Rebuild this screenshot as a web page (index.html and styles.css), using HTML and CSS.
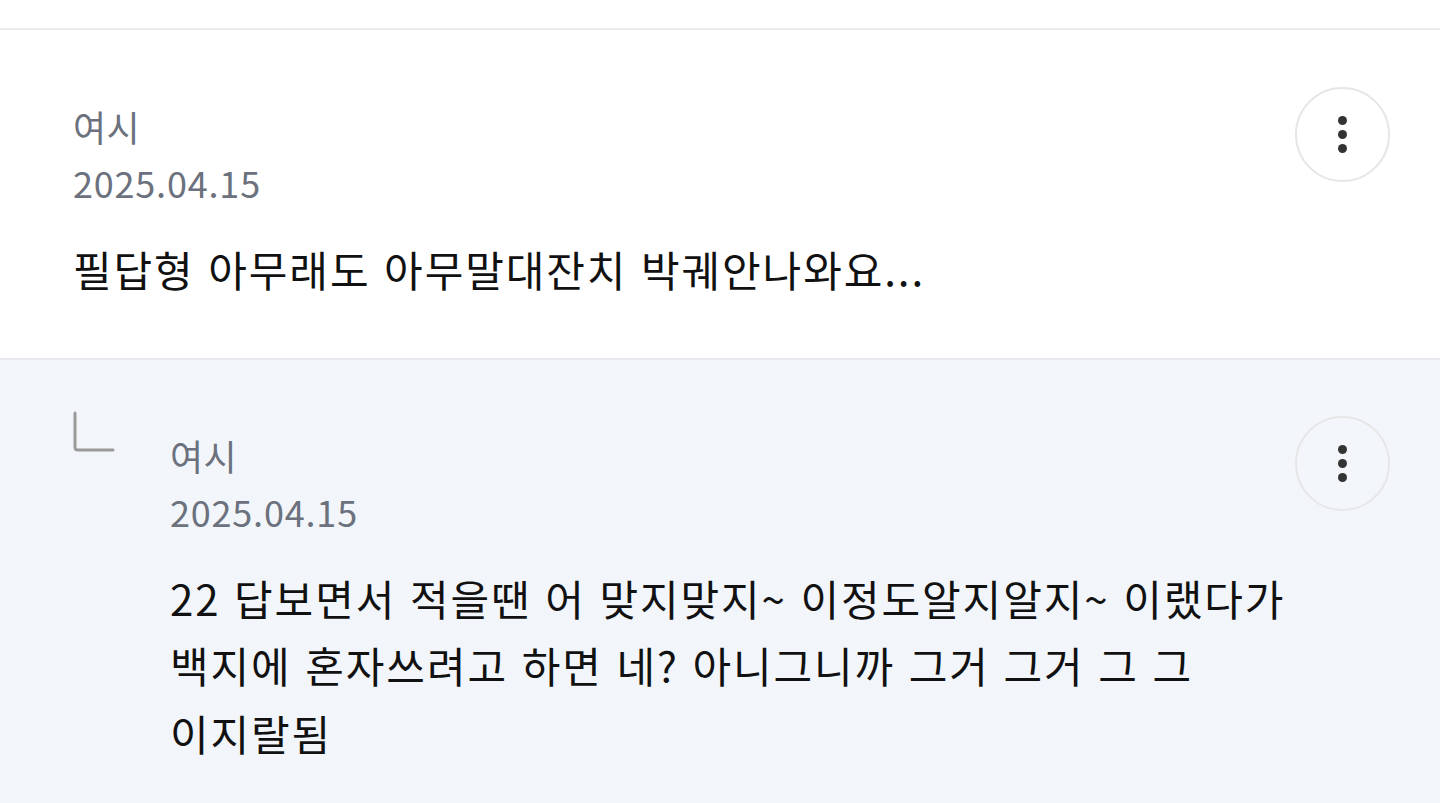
FILE: index.html
```html
<!DOCTYPE html>
<html lang="ko">
<head>
<meta charset="utf-8">
<title>댓글</title>
<link rel="stylesheet" href="styles.css">
</head>
<body>
<div class="topbar"></div>

<section class="comment">
  <div class="comment-main">
    <div class="author">여시</div>
    <div class="date">2025.04.15</div>
    <p class="text">필답형 아무래도 아무말대잔치 박궤안나와요...</p>
  </div>
  <button class="more" type="button" aria-label="더보기">
    <span class="dot"></span><span class="dot"></span><span class="dot"></span>
  </button>
</section>

<section class="comment reply">
  <svg class="reply-icon" width="42" height="42" viewBox="0 0 42 42" aria-hidden="true">
    <path d="M2 2 V36 Q2 39 5 39 H40" fill="none" stroke="#9a9a9a" stroke-width="3" stroke-linecap="round"/>
  </svg>
  <div class="comment-main">
    <div class="author">여시</div>
    <div class="date">2025.04.15</div>
    <p class="text">22 답보면서 적을땐 어 맞지맞지~ 이정도알지알지~ 이랬다가 백지에 혼자쓰려고 하면 네? 아니그니까 그거 그거 그 그 이지랄됨</p>
  </div>
  <button class="more" type="button" aria-label="더보기">
    <span class="dot"></span><span class="dot"></span><span class="dot"></span>
  </button>
</section>
</body>
</html>
```

FILE: styles.css
```css
html, body {
  margin: 0;
  padding: 0;
}

body {
  background: #ffffff;
  font-family: "Noto Sans CJK KR", "Noto Sans", sans-serif;
  color: #111111;
  overflow: hidden;
}

.topbar {
  height: 28px;
  border-bottom: 2px solid #e9ebef;
}

.comment {
  display: flex;
  align-items: flex-start;
  padding: 57px 50px 55px 73px;
  gap: 10px;
}

.comment-main {
  flex: 1;
  min-width: 0;
  margin-top: 12px;
}

.author {
  font-size: 36px;
  line-height: 54px;
  color: #6b717d;
  letter-spacing: 0.5px;
}

.date {
  font-size: 36px;
  line-height: 54px;
  color: #6b717d;
  margin-top: 2px;
  letter-spacing: 0.8px;
}

.text {
  margin: 26px 0 0;
  font-size: 42px;
  line-height: 67.5px;
  color: #111111;
  letter-spacing: 1.9px;
  word-break: keep-all;
}

.more {
  flex: none;
  width: 95px;
  height: 95px;
  border-radius: 50%;
  border: 2px solid #e6e6e6;
  background: transparent;
  padding: 0;
  display: flex;
  flex-direction: column;
  align-items: center;
  justify-content: center;
  gap: 5px;
}

.dot {
  width: 9px;
  height: 9px;
  border-radius: 50%;
  background: #333333;
}

.reply {
  box-sizing: border-box;
  background: #f2f6fa;
  border-top: 2px solid #e7eaee;
  padding-top: 56px;
  padding-bottom: 30px;
  min-height: 445px;
  gap: 0;
}

.reply-icon {
  flex: none;
  margin-top: -5px;
  margin-right: 55px;
}
```
